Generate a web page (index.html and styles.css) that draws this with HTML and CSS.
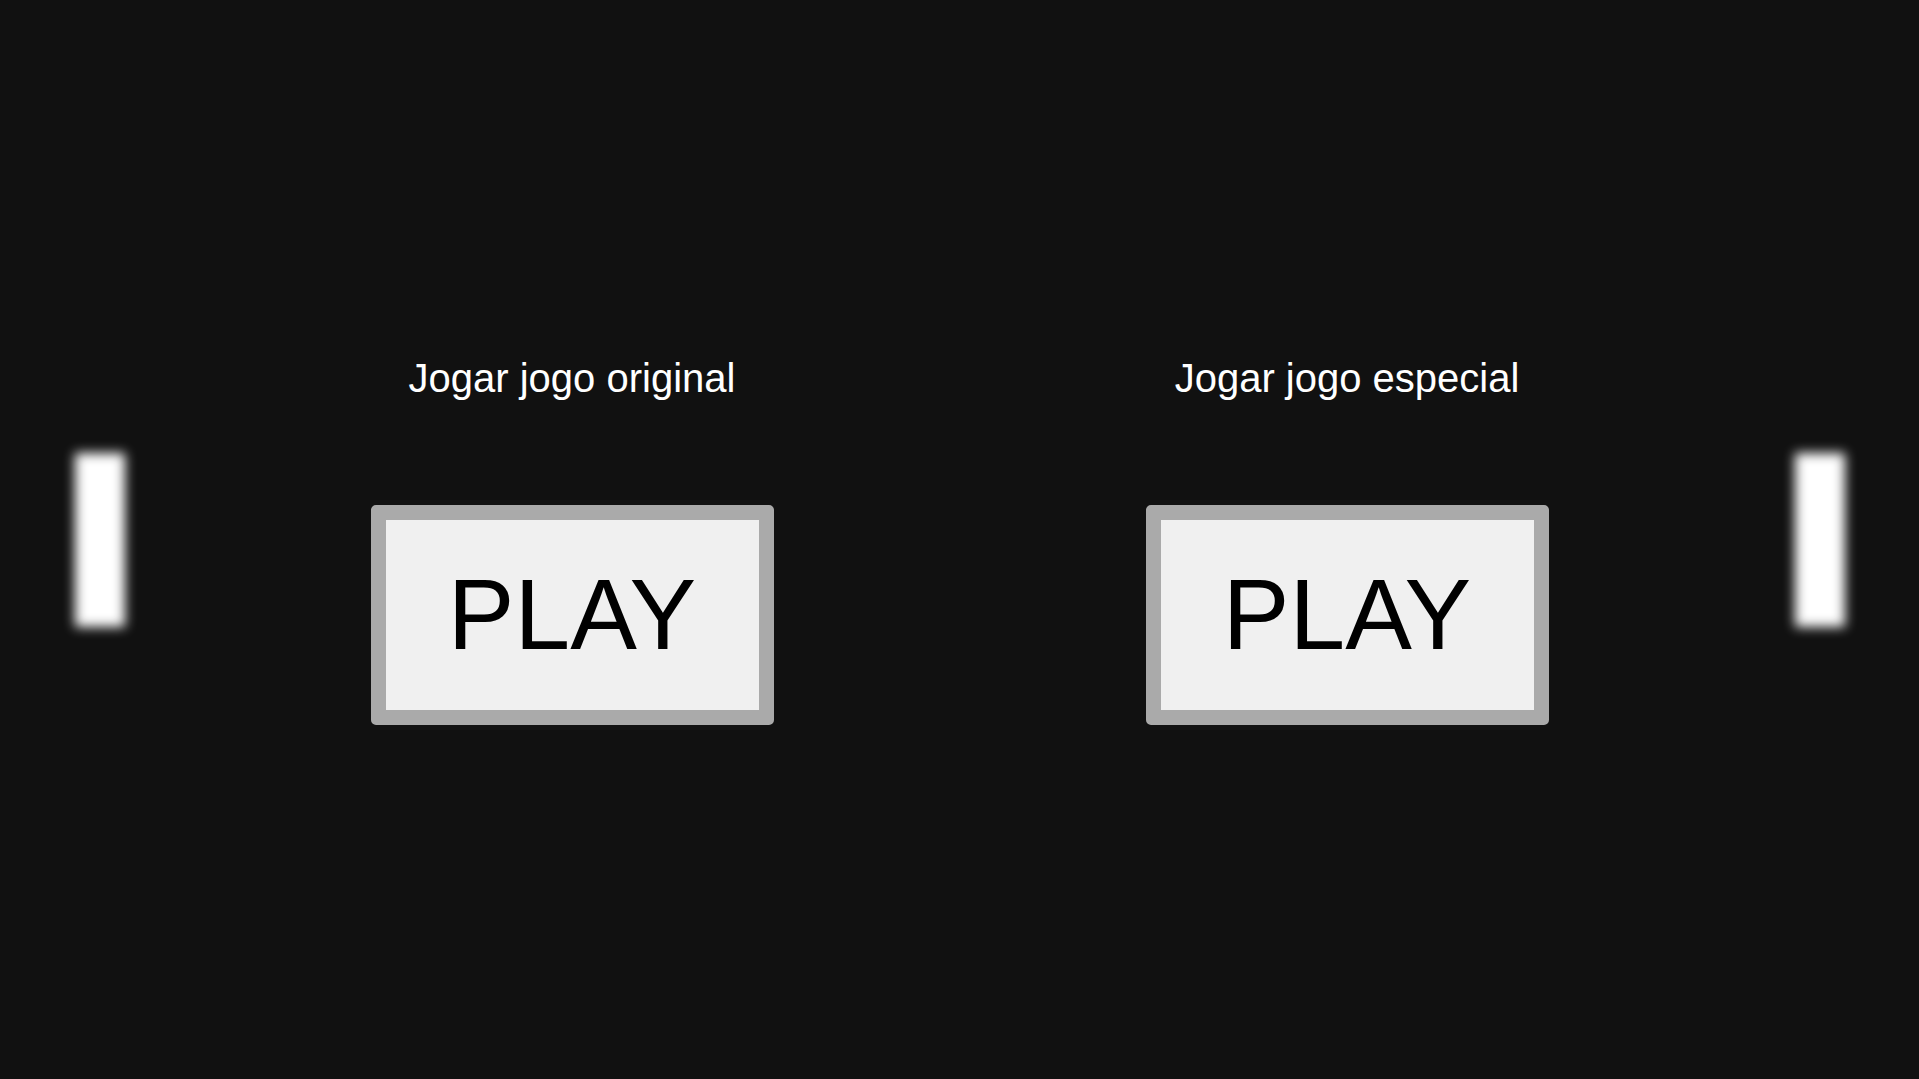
FILE: index.html
```html
<!DOCTYPE html>
<html lang="pt">
<head>
<meta charset="utf-8">
<title>Pong</title>
<link rel="stylesheet" href="styles.css">
</head>
<body>
<div class="stage">
  <div class="paddle paddle-left"></div>
  <div class="paddle paddle-right"></div>
  <main class="menu">
    <section class="option">
      <h2 class="option-title">Jogar jogo original</h2>
      <button class="play-btn">PLAY</button>
    </section>
    <section class="option">
      <h2 class="option-title">Jogar jogo especial</h2>
      <button class="play-btn">PLAY</button>
    </section>
  </main>
</div>
</body>
</html>
```
FILE: styles.css
```css
* { box-sizing: border-box; }
html, body {
  margin: 0;
  padding: 0;
  width: 100%;
  height: 100%;
  background: #111111;
  overflow: hidden;
}
body {
  font-family: "Liberation Sans", Arial, sans-serif;
}
.stage {
  position: relative;
  width: 100%;
  height: 100%;
  display: flex;
  align-items: center;
  justify-content: center;
}
.paddle {
  position: absolute;
  top: 453px;
  width: 50px;
  height: 174px;
  background: #ffffff;
  filter: blur(6px);
}
.paddle-left { left: 75px; }
.paddle-right { right: 74px; }
.menu {
  display: flex;
  gap: 372px;
  align-items: flex-start;
}
.option {
  display: flex;
  flex-direction: column;
  align-items: center;
  gap: 104px;
  width: 403px;
}
.option-title {
  margin: 0;
  color: #ffffff;
  font-size: 40px;
  font-weight: normal;
  line-height: 46px;
  white-space: nowrap;
}
.play-btn {
  width: 403px;
  height: 220px;
  border: 15px solid #aaaaaa;
  border-radius: 5px;
  background: #f0f0f0;
  color: #000000;
  font-family: "Liberation Sans", Arial, sans-serif;
  font-size: 100px;
  line-height: 115px;
  padding: 0;
  display: flex;
  align-items: center;
  justify-content: center;
}
```
